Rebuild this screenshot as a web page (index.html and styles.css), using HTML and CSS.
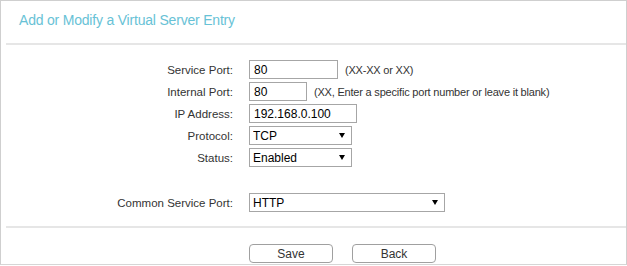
FILE: index.html
```html
<!DOCTYPE html>
<html lang="en">
<head>
    <meta charset="UTF-8">
    <title>Add or Modify a Virtual Server Entry</title>
    <link rel="stylesheet" href="styles.css">
</head>
<body>
    <div class="panel">
        <h2 class="title">Add or Modify a Virtual Server Entry</h2>
        <div class="sep"></div>

        <div class="form">
            <div class="row">
                <label for="servicePort">Service Port:</label>
                <input type="text" id="servicePort" class="w-service" value="80">
                <span class="hint">(XX-XX or XX)</span>
            </div>
            <div class="row">
                <label for="internalPort">Internal Port:</label>
                <input type="text" id="internalPort" class="w-internal" value="80">
                <span class="hint">(XX, Enter a specific port number or leave it blank)</span>
            </div>
            <div class="row">
                <label for="ipAddress">IP Address:</label>
                <input type="text" id="ipAddress" class="w-ip" value="192.168.0.100">
            </div>
            <div class="row">
                <label for="protocol">Protocol:</label>
                <div class="select w-select">
                    <select id="protocol">
                        <option>TCP</option>
                        <option>UDP</option>
                        <option>ALL</option>
                    </select>
                </div>
            </div>
            <div class="row">
                <label for="status">Status:</label>
                <div class="select w-select">
                    <select id="status">
                        <option>Enabled</option>
                        <option>Disabled</option>
                    </select>
                </div>
            </div>
            <div class="row row-common">
                <label for="common">Common Service Port:</label>
                <div class="select w-common">
                    <select id="common">
                        <option>HTTP</option>
                        <option>FTP</option>
                        <option>TELNET</option>
                    </select>
                </div>
            </div>
        </div>

        <div class="sep"></div>

        <div class="buttons">
            <button type="button" id="saveButton">Save</button>
            <button type="button" id="backButton">Back</button>
        </div>
    </div>
</body>
</html>
```

FILE: styles.css
```css
body {
    margin: 0;
    padding: 0;
    background: #ffffff;
    font-family: "Liberation Sans", Arial, sans-serif;
    font-size: 12px;
    color: #333;
}
.panel {
    height: 265px;
    box-sizing: border-box;
    border: 1px solid #cfcfcf;
    border-bottom-color: #d6d6d6;
}
.title {
    margin: 0;
    height: 42px;
    padding: 11px 0 0 18px;
    box-sizing: border-box;
    font-size: 14px;
    letter-spacing: -0.2px;
    font-weight: normal;
    color: #68c2d6;
}
.sep { margin-left: 5px; height: 2px; background: #e6e6e6; }
.form { padding: 15px 0 14px; }
.row { display: flex; align-items: center; height: 19px; margin-bottom: 3px; }
.row-common { margin-top: 26px; margin-bottom: 0; }
.row label {
    width: 248px;
    padding-right: 16px;
    box-sizing: border-box;
    text-align: right;
    font-size: 11.5px;
    color: #333;
}
input, select, button { font-family: inherit; font-size: 12px; color: #000; }
input {
    height: 19px;
    box-sizing: border-box;
    margin: 0;
    padding: 0 4px;
    border: 1px solid #a6a6a6;
    background: #fff;
}
.hint { margin-left: 7px; font-size: 11px; letter-spacing: -0.2px; color: #333; }
.w-service { width: 89px; }
.w-internal { width: 58px; }
.w-ip { width: 108px; }
.w-select { width: 103px; }
.w-common { width: 196px; }
.select { position: relative; height: 19px; }
.select select {
    width: 100%;
    height: 19px;
    margin: 0;
    padding: 0 3px;
    border: 1px solid #a6a6a6;
    background: #fff;
    -webkit-appearance: none;
    appearance: none;
    outline: none;
}
.select::after {
    content: "";
    position: absolute;
    right: 7px;
    top: 7px;
    border-left: 3px solid transparent;
    border-right: 3px solid transparent;
    border-top: 5px solid #000;
    pointer-events: none;
}
.buttons { display: flex; gap: 19px; padding: 16px 0 0 248px; }
button {
    width: 84px;
    height: 19px;
    padding: 0;
    border: 1px solid #a0a0a0;
    border-radius: 4px;
    background: #fff;
    color: #333;
    cursor: pointer;
}
button:hover { background: #f2f2f2; }
```
